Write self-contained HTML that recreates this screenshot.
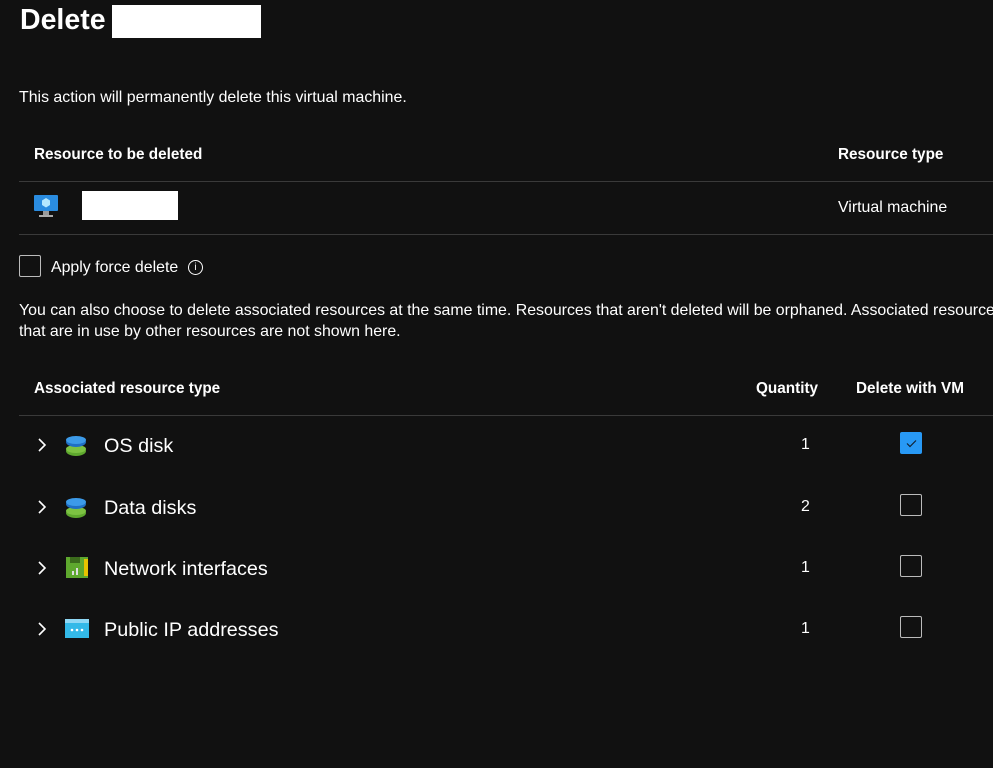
<!DOCTYPE html>
<html><head><meta charset="utf-8"><style>
html,body{margin:0;padding:0;background:#111;width:993px;height:768px;overflow:hidden;color:#fff;font-family:"Liberation Sans",sans-serif;}
.a{position:absolute;white-space:nowrap;line-height:1;}
.b{font-weight:bold;font-size:15.3px;}
.t{font-size:15.9px;}
.r{font-size:19.8px;}
.hl{position:absolute;left:19px;width:974px;height:1px;background:#3a3a3a;}
.cb{position:absolute;width:20px;height:20px;border:1px solid #bbb;border-radius:2px;}
.chev{position:absolute;left:36px;}
</style></head><body>
<div class="a" style="left:20px;top:6px;font-size:28.5px;font-weight:bold;">Delete</div>
<div style="position:absolute;left:112px;top:5px;width:149px;height:33px;background:#fff"></div>
<div class="a t" style="left:19px;top:90px;">This action will permanently delete this virtual machine.</div>
<div class="a b" style="left:34px;top:147px;">Resource to be deleted</div>
<div class="a b" style="left:838px;top:147px;">Resource type</div>
<div class="hl" style="top:181px"></div>
<svg style="position:absolute;left:33px;top:194px" width="26" height="25" viewBox="0 0 26 25"><rect x="1" y="1" width="24" height="16" rx="1" fill="#2a8ce0"/><polygon points="13,4 17,6.5 17,11 13,13.5 9,11 9,6.5" fill="#b5e8ff"/><rect x="10" y="17" width="6" height="4" fill="#999"/><rect x="6" y="21" width="14" height="2" fill="#aaa"/></svg>
<div style="position:absolute;left:82px;top:191px;width:96px;height:29px;background:#fff"></div>
<div class="a t" style="left:838px;top:200px;">Virtual machine</div>
<div class="hl" style="top:234px"></div>
<div class="cb" style="left:19px;top:255px;"></div>
<div class="a t" style="left:51px;top:260px;">Apply force delete</div>
<div style="position:absolute;left:188px;top:260px;width:13px;height:13px;border:1.3px solid #fff;border-radius:50%;font-size:10px;text-align:center;line-height:13px;font-family:'Liberation Sans',sans-serif;">i</div>
<div class="a t" style="left:19px;top:303px;">You can also choose to delete associated resources at the same time. Resources that aren't deleted will be orphaned. Associated resources</div>
<div class="a t" style="left:19px;top:324px;">that are in use by other resources are not shown here.</div>
<div class="a b" style="left:34px;top:381px;">Associated resource type</div>
<div class="a b" style="left:756px;top:381px;">Quantity</div>
<div class="a b" style="left:856px;top:381px;">Delete with VM</div>
<div class="hl" style="top:415px"></div>

<svg class="chev" style="top:437px" width="12" height="16"><path d="M3 2l6 6-6 6" stroke="#fff" stroke-width="1.6" fill="none"/></svg>
<svg style="position:absolute;left:65px;top:434px" width="24" height="24"><ellipse cx="11" cy="17" rx="10" ry="5" fill="#5ea82e"/><ellipse cx="11" cy="15" rx="10" ry="4" fill="#7cc242"/><ellipse cx="11" cy="8" rx="10" ry="5" fill="#1f6fc4"/><ellipse cx="11" cy="6" rx="10" ry="4" fill="#3c9ae8"/></svg>
<div class="a r" style="left:104px;top:437px;">OS disk</div>
<div class="a t" style="left:801px;top:437px;">1</div>
<div style="position:absolute;left:900px;top:432px;width:22px;height:22px;background:#2899f5;border-radius:2px;"><svg width="22" height="22"><path d="M7 11.5l3 3 6-6" stroke="#123" stroke-width="1.2" fill="none"/></svg></div>

<svg class="chev" style="top:499px" width="12" height="16"><path d="M3 2l6 6-6 6" stroke="#fff" stroke-width="1.6" fill="none"/></svg>
<svg style="position:absolute;left:65px;top:496px" width="24" height="24"><ellipse cx="11" cy="17" rx="10" ry="5" fill="#5ea82e"/><ellipse cx="11" cy="15" rx="10" ry="4" fill="#7cc242"/><ellipse cx="11" cy="8" rx="10" ry="5" fill="#1f6fc4"/><ellipse cx="11" cy="6" rx="10" ry="4" fill="#3c9ae8"/></svg>
<div class="a r" style="left:104px;top:499px;">Data disks</div>
<div class="a t" style="left:801px;top:499px;">2</div>
<div class="cb" style="left:900px;top:494px;"></div>

<svg class="chev" style="top:560px" width="12" height="16"><path d="M3 2l6 6-6 6" stroke="#fff" stroke-width="1.6" fill="none"/></svg>
<svg style="position:absolute;left:65px;top:556px" width="24" height="24"><rect x="1" y="1" width="22" height="21" fill="#5ea82e"/><rect x="19" y="3" width="4" height="17" fill="#e6c200"/><rect x="5" y="1" width="10" height="6" fill="#3b6b1c"/><rect x="11" y="12" width="2" height="7" fill="#ddd"/><rect x="7" y="15" width="2" height="4" fill="#ddd"/></svg>
<div class="a r" style="left:104px;top:560px;">Network interfaces</div>
<div class="a t" style="left:801px;top:560px;">1</div>
<div class="cb" style="left:900px;top:555px;"></div>

<svg class="chev" style="top:621px" width="12" height="16"><path d="M3 2l6 6-6 6" stroke="#fff" stroke-width="1.6" fill="none"/></svg>
<svg style="position:absolute;left:64px;top:618px" width="26" height="22"><rect x="1" y="1" width="24" height="19" fill="#33b9e8"/><rect x="1" y="1" width="24" height="4" fill="#8fd8f5"/><circle cx="8" cy="12" r="1.3" fill="#fff"/><circle cx="13" cy="12" r="1.3" fill="#fff"/><circle cx="18" cy="12" r="1.3" fill="#fff"/></svg>
<div class="a r" style="left:104px;top:621px;">Public IP addresses</div>
<div class="a t" style="left:801px;top:621px;">1</div>
<div class="cb" style="left:900px;top:616px;"></div>
</body></html>
